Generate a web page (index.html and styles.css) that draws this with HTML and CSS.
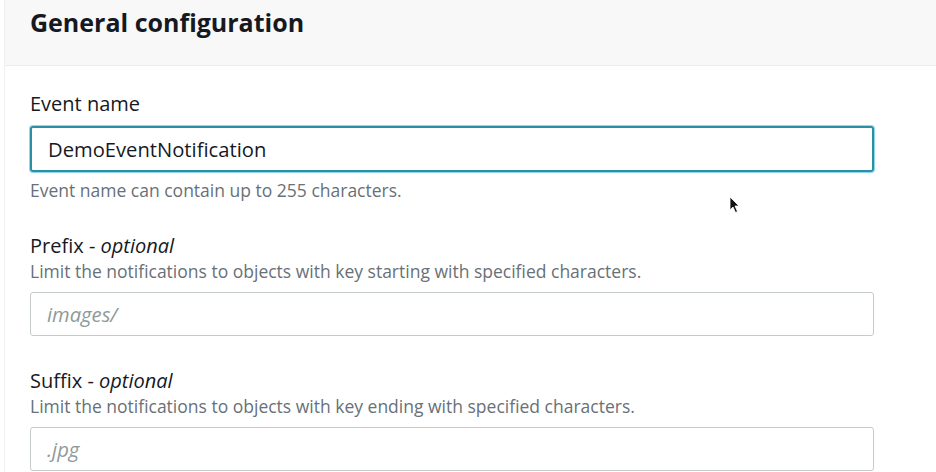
FILE: index.html
```html
<!DOCTYPE html>
<html>
<head>
<meta charset="utf-8">
<link rel="stylesheet" href="styles.css">
</head>
<body>
<div class="panel">
  <div class="panel-header">
    <h2 class="title">General configuration</h2>
  </div>
  <div class="panel-body">
    <div class="field">
      <label class="label">Event name</label>
      <div class="input focused">DemoEventNotification</div>
      <div class="hint">Event name can contain up to 255 characters.</div>
    </div>
    <div class="field">
      <label class="label">Prefix - <i>optional</i></label>
      <div class="desc">Limit the notifications to objects with key starting with specified characters.</div>
      <div class="input placeholder">images/</div>
    </div>
    <div class="field">
      <label class="label">Suffix - <i>optional</i></label>
      <div class="desc">Limit the notifications to objects with key ending with specified characters.</div>
      <div class="input placeholder">.jpg</div>
    </div>
  </div>
  <svg class="cursor" width="12" height="18" viewBox="0 0 12 18"><path d="M1 1 L1 14 L4 11 L6.5 16.5 L8.5 15.5 L6 10 L10 10 Z" fill="#111" stroke="#fff" stroke-width="0.8"/></svg>
</div>
</body>
</html>
```
FILE: styles.css
```css
html, body { margin: 0; padding: 0; background: #fff; }
body { font-family: "Open Sans", "Noto Sans", sans-serif; color: #16191f; width: 936px; height: 472px; overflow: hidden; }
.panel { position: relative; margin-left: 4px; border-left: 1px solid #eef0f0; height: 472px; }
.panel-header { height: 66px; background: #f8f8f8; border-bottom: 1px solid #eaeded; padding: 0 25px; box-sizing: border-box; }
.title { margin: 0; padding-top: 5px; font-size: 25px; font-weight: 700; line-height: 34px; color: #16191f; }
.panel-body { padding: 26px 62px 0 25px; }
.field { margin-bottom: 33px; }
.label { display: block; font-size: 20px; line-height: 24px; color: #16191f; }
.label i { font-weight: 400; }
.desc { font-size: 17.5px; line-height: 22px; color: #687078; margin-top: 2px; }
.input { box-sizing: border-box; height: 44px; margin-top: 10px; border: 1px solid #c5cbcb; border-radius: 3px; padding: 0 16px; font-size: 20.2px; line-height: 42px; color: #16191f; }
.input.focused { height: 46px; border: 2px solid #2b8fa5; box-shadow: 0 0 0 1px #8fd8ea; line-height: 42px; }
.input.placeholder { font-style: italic; color: #8d9a9b; }
.hint { font-size: 17.5px; line-height: 22px; color: #687078; margin-top: 7px; }
.cursor { position: absolute; left: 724px; top: 196px; }
```
